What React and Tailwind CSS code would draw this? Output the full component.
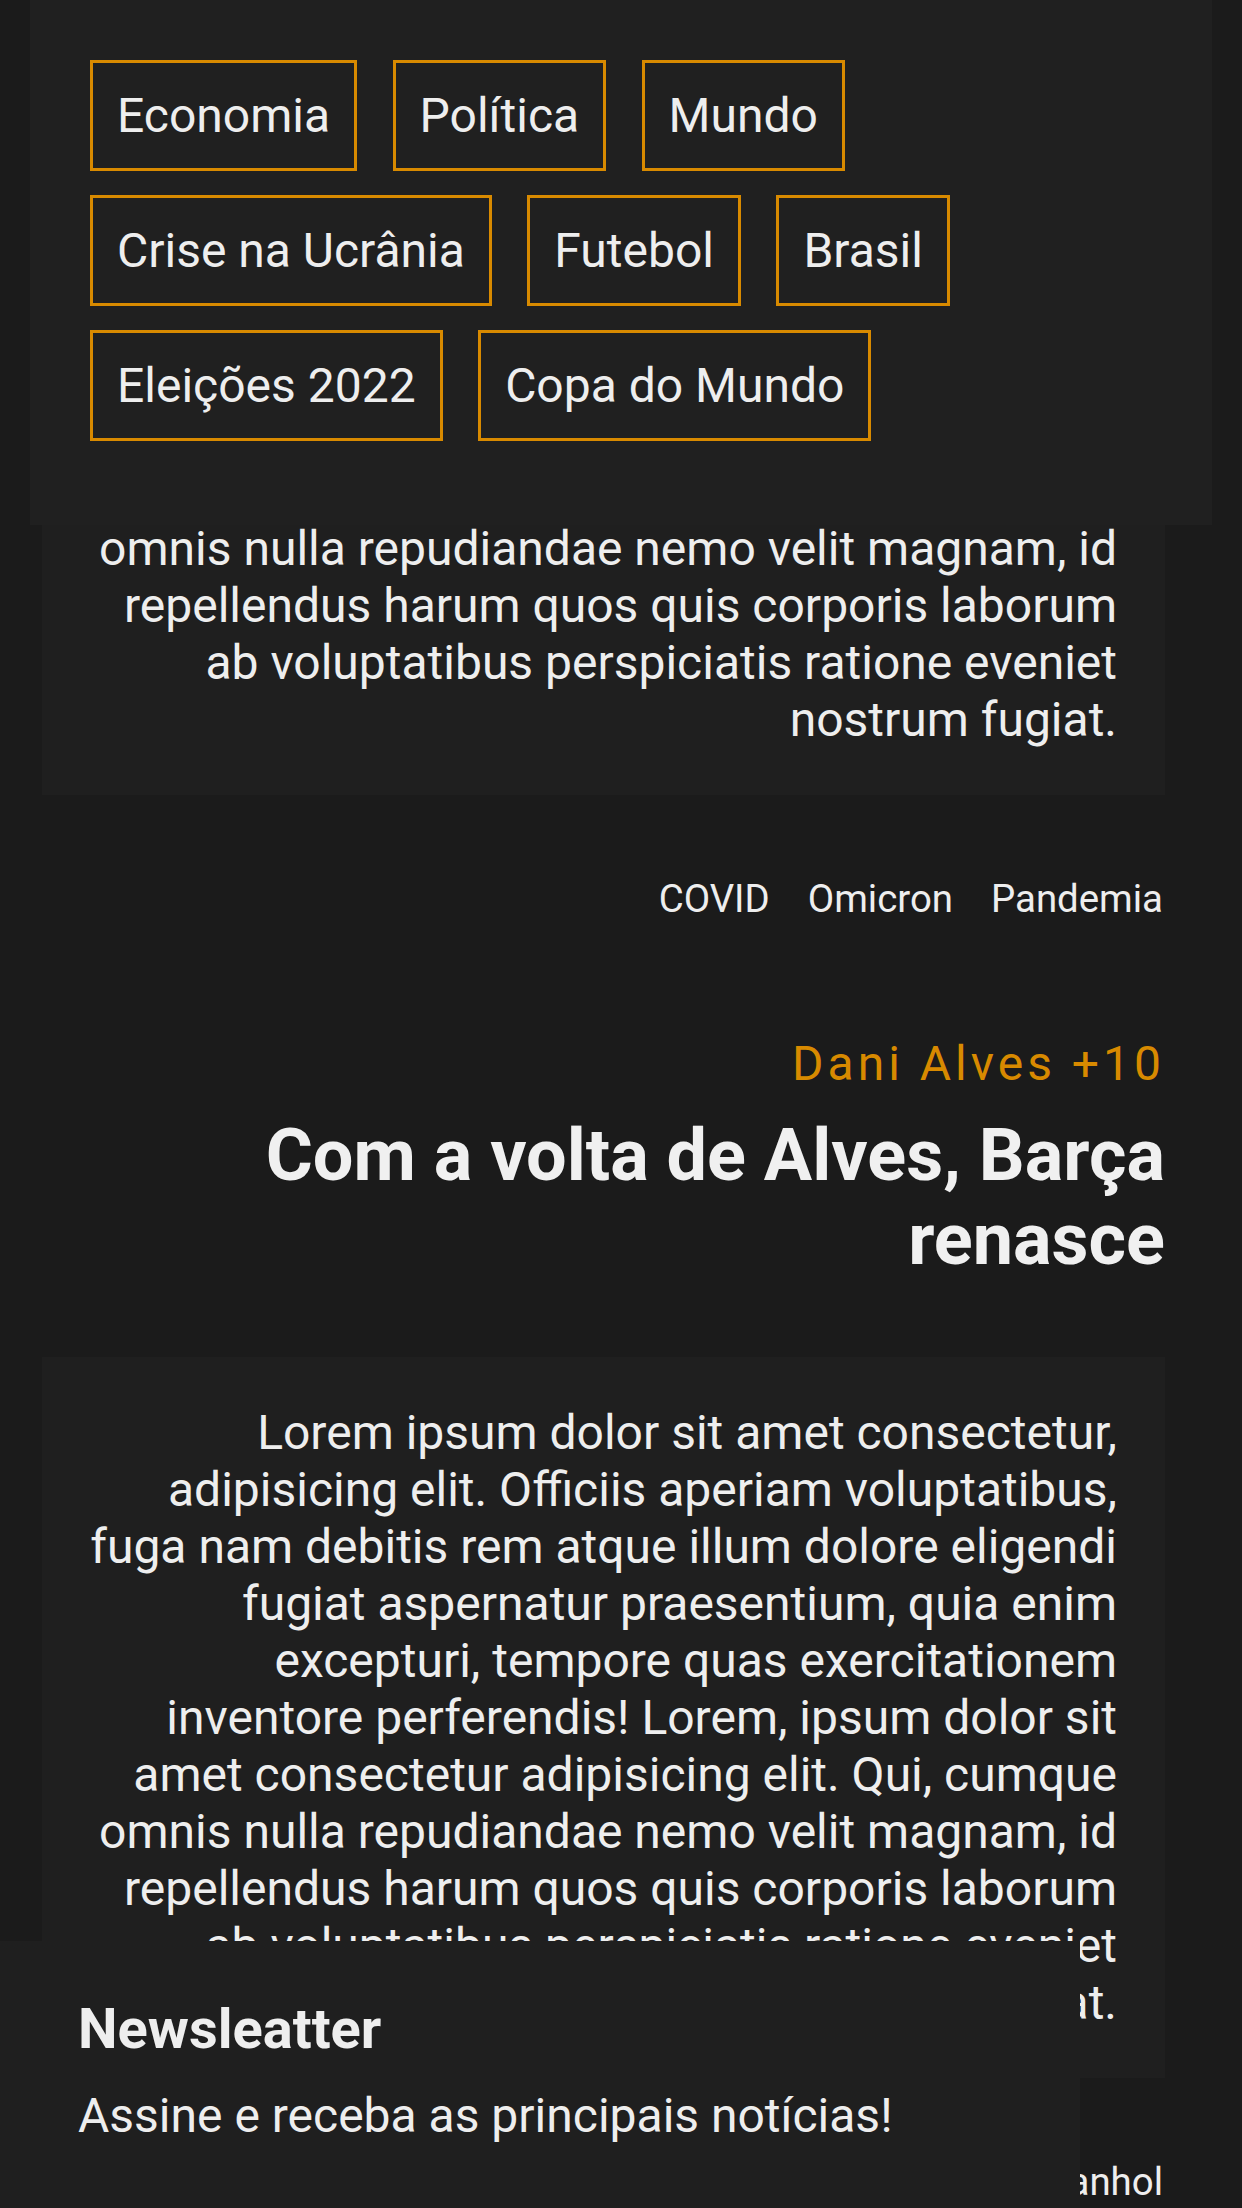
import React from "react";

const LOREM =
  "Lorem ipsum dolor sit amet consectetur, adipisicing elit. Officiis aperiam voluptatibus, fuga nam debitis rem atque illum dolore eligendi fugiat aspernatur praesentium, quia enim excepturi, tempore quas exercitationem inventore perferendis! Lorem, ipsum dolor sit amet consectetur adipisicing elit. Qui, cumque omnis nulla repudiandae nemo velit magnam, id repellendus harum quos quis corporis laborum ab voluptatibus perspiciatis ratione eveniet nostrum fugiat.";

const CATEGORIES = [
  "Economia",
  "Política",
  "Mundo",
  "Crise na Ucrânia",
  "Futebol",
  "Brasil",
  "Eleições 2022",
  "Copa do Mundo",
];

function Card() {
  return (
    <div className="bg-[#1f1f1f] px-[48px] py-[47px]">
      <p className="text-right text-[48px] leading-[57px] text-[#eeeeee]">{LOREM}</p>
    </div>
  );
}

function Tags({ items }) {
  return (
    <div className="flex justify-end gap-[38px] pr-[2px] text-[38.4px] leading-[45px] text-[#eeeeee]">
      {items.map((t) => (
        <span key={t}>{t}</span>
      ))}
    </div>
  );
}

export default function App() {
  return (
    <div className="relative h-[2208px] w-[1242px] overflow-hidden bg-[#1b1b1b] font-[Roboto,sans-serif]">
      {/* Main content */}
      <main className="ml-[42px] flex w-[1123px] flex-col pt-[74px]">
        <Card />
        <div className="mt-[81px]">
          <Tags items={["COVID", "Omicron", "Pandemia"]} />
        </div>
        <div className="mt-[115px] text-right text-[48px] leading-[56px] tracking-[4px] text-[#d88a00]">
          Dani Alves +10
        </div>
        <h2 className="mt-[22px] text-right text-[72px] font-bold leading-[84px] text-[#f0f0f0]">
          Com a volta de Alves, Barça renasce
        </h2>
        <div className="mt-[75px]">
          <Card />
        </div>
        <div className="mt-[81px]">
          <Tags items={["Barcelona", "Futebol Espanhol"]} />
        </div>
      </main>

      {/* Top categories overlay */}
      <nav className="absolute left-[30px] top-0 h-[525px] w-[1182px] bg-[#202020] px-[60px] pt-[60px]">
        <div className="flex flex-wrap content-start gap-x-[35.5px] gap-y-[24px]">
          {CATEGORIES.map((c) => (
            <button
              key={c}
              className="border-[3px] border-[#d88a00] px-[24px] py-[24px] text-[48px] leading-[57px] text-[#eeeeee]"
            >
              {c}
            </button>
          ))}
        </div>
      </nav>

      {/* Newsletter overlay */}
      <aside className="absolute left-0 top-[1941px] h-[300px] w-[1080px] bg-[#1f1f1f] pl-[78px] pt-[55px]">
        <h3 className="text-[56px] font-bold leading-[66px] text-[#eeeeee]">Newsleatter</h3>
        <p className="mt-[26px] text-[48px] leading-[56px] text-[#eeeeee]">
          Assine e receba as principais notícias!
        </p>
      </aside>
    </div>
  );
}
